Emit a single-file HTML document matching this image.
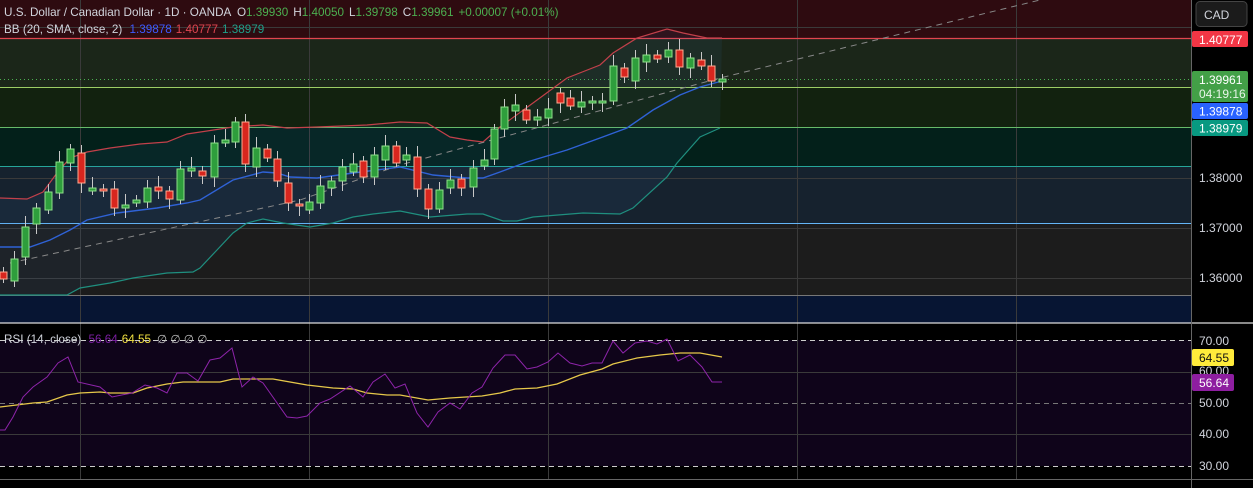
<!DOCTYPE html>
<html><head><meta charset="utf-8"><style>
html,body{margin:0;padding:0;background:#000;width:1253px;height:488px;overflow:hidden;font-family:"Liberation Sans",sans-serif}
svg{position:absolute;left:0;top:0}
</style></head><body>
<svg id="s" width="1253" height="488" xmlns="http://www.w3.org/2000/svg" font-family="Liberation Sans, sans-serif" font-size="12">
<rect x="0" y="0" width="1191" height="38" fill="#2e0b10"/>
<rect x="0" y="38" width="1191" height="49" fill="#1b2619"/>
<rect x="0" y="87" width="1191" height="40" fill="#12220f"/>
<rect x="0" y="127" width="1191" height="39" fill="#03201a"/>
<rect x="0" y="166" width="1191" height="57" fill="#16222e"/>
<rect x="0" y="223" width="1191" height="72" fill="#1c1c1c"/>
<rect x="0" y="295" width="1191" height="28" fill="#071533"/>
<rect x="0" y="340" width="1191" height="126" fill="#0f041a"/>
<g stroke="#3a3a3a" stroke-width="1">
<line x1="80.5" y1="0" x2="80.5" y2="479"/><line x1="309.5" y1="0" x2="309.5" y2="479"/><line x1="548.5" y1="0" x2="548.5" y2="479"/><line x1="797.5" y1="0" x2="797.5" y2="479"/><line x1="1016.5" y1="0" x2="1016.5" y2="479"/>
<line x1="0" y1="27.5" x2="1191" y2="27.5"/><line x1="0" y1="178.5" x2="1191" y2="178.5"/><line x1="0" y1="228.5" x2="1191" y2="228.5"/><line x1="0" y1="278.5" x2="1191" y2="278.5"/>
<line x1="0" y1="372.5" x2="1191" y2="372.5"/><line x1="0" y1="434.5" x2="1191" y2="434.5"/>
</g>
<line x1="0" y1="38.5" x2="1191" y2="38.5" stroke="#e0454f" stroke-width="1.3"/>
<line x1="0" y1="79.5" x2="1191" y2="79.5" stroke="#4caf50" stroke-dasharray="1 3"/>
<line x1="0" y1="87.5" x2="1191" y2="87.5" stroke="#9ccc65"/>
<line x1="0" y1="127.5" x2="1191" y2="127.5" stroke="#66bb6a"/>
<line x1="0" y1="166.5" x2="1191" y2="166.5" stroke="#26a69a"/>
<line x1="0" y1="223.5" x2="1191" y2="223.5" stroke="#64b5f6"/>
<line x1="0" y1="295.5" x2="1191" y2="295.5" stroke="#777"/>
<line x1="0" y1="323" x2="1253" y2="323" stroke="#ddd" stroke-width="1.3"/>
<line x1="0" y1="340.5" x2="1191" y2="340.5" stroke="#ccc" stroke-dasharray="5 4"/>
<line x1="0" y1="403.5" x2="1191" y2="403.5" stroke="#777" stroke-dasharray="5 4"/>
<line x1="0" y1="466.5" x2="1191" y2="466.5" stroke="#ccc" stroke-dasharray="5 4"/>
<line x1="0" y1="479.5" x2="1253" y2="479.5" stroke="#666"/>
<line x1="1191.5" y1="0" x2="1191.5" y2="488" stroke="#666"/>
<polygon id="bbfill" fill="rgba(70,130,200,0.08)"/>
<polyline id="up" fill="none" stroke="#c2404a" stroke-width="1.2"/>
<polyline id="mid" fill="none" stroke="#2f62d6" stroke-width="1.4"/>
<polyline id="lo" fill="none" stroke="#1f8f7f" stroke-width="1.2"/>
<polyline points="10,263 300,200 400,165 720,78 1040,0" fill="none" stroke="#888" stroke-dasharray="6 5"/>
<g id="cd"></g>
<polyline id="rsiY" fill="none" stroke="#e6c84a" stroke-width="1.3"/>
<polyline id="rsiP" fill="none" stroke="#8e24aa" stroke-width="1"/>
<g font-size="11.7">
<text x="4" y="16" fill="#d1d4dc">U.S. Dollar / Canadian Dollar · 1D · OANDA <tspan dx="3">O</tspan><tspan fill="#4caf50">1.39930</tspan><tspan dx="5">H</tspan><tspan fill="#4caf50">1.40050</tspan><tspan dx="5">L</tspan><tspan fill="#4caf50">1.39798</tspan><tspan dx="5">C</tspan><tspan fill="#4caf50">1.39961</tspan><tspan dx="5" fill="#4caf50">+0.00007 (+0.01%)</tspan></text>
<text x="4" y="33" fill="#d1d4dc">BB (20, SMA, close, 2) <tspan dx="4" fill="#3d5afe">1.39878</tspan><tspan dx="4" fill="#e0454f">1.40777</tspan><tspan dx="4" fill="#1f9f8a">1.38979</tspan></text>
<text x="4" y="343" fill="#d1d4dc">RSI (14, close) <tspan dx="4" fill="#7b1fa2">56.64</tspan><tspan dx="4" fill="#f0e040">64.55</tspan><tspan dx="6" fill="#bbb">∅ ∅ ∅ ∅</tspan></text>
</g>
<rect x="1196" y="1.5" width="51" height="25" rx="4" fill="#1b1b1b" stroke="#444"/>
<text x="1204" y="19" fill="#d1d4dc">CAD</text>
<rect x="1192" y="31" width="56" height="16" rx="2" fill="#f23645"/><text x="1199" y="44" fill="#fff">1.40777</text>
<rect x="1192" y="71" width="56" height="31" rx="2" fill="#43a047"/><text x="1199" y="84" fill="#fff">1.39961</text><text x="1199" y="98" fill="#e8f5e9">04:19:16</text>
<rect x="1192" y="103" width="56" height="16" rx="2" fill="#2962ff"/><text x="1199" y="115.5" fill="#fff">1.39878</text>
<rect x="1192" y="120" width="56" height="16" rx="2" fill="#089981"/><text x="1199" y="132.5" fill="#fff">1.38979</text>
<g fill="#d1d4dc"><text x="1199" y="182">1.38000</text><text x="1199" y="232">1.37000</text><text x="1199" y="282">1.36000</text>
<text x="1199" y="345">70.00</text><text x="1199" y="375">60.00</text><text x="1199" y="407">50.00</text><text x="1199" y="438">40.00</text><text x="1199" y="470">30.00</text></g>
<rect x="1192" y="349" width="42" height="17" rx="2" fill="#ffeb3b"/><text x="1199" y="362" fill="#111">64.55</text>
<rect x="1192" y="374" width="42" height="17" rx="2" fill="#8e1ea0"/><text x="1199" y="387" fill="#fff">56.64</text>
</svg>
<script>
var up=[[0,198],[27,199],[43,192],[57,173],[70,158],[87,152],[110,148],[140,144],[167,142],[187,134],[207,131],[233,127],[263,125],[287,128],[317,127],[367,125],[400,122],[427,123],[450,137],[467,140],[483,142],[500,127],[533,103],[567,78],[600,65],[613,53],[637,38],[667,29],[683,33],[707,38],[722,38]];
var mid=[[0,247],[30,247],[50,240],[70,230],[87,220],[117,213],[157,208],[187,203],[200,200],[233,180],[263,172],[277,173],[290,177],[317,178],[353,173],[400,167],[433,175],[467,178],[483,178],[500,172],[527,162],[567,150],[600,138],[627,128],[653,110],[680,95],[700,87],[722,81]];
var lo=[[0,295],[67,295],[80,288],[110,283],[133,278],[167,273],[193,272],[200,268],[217,250],[233,233],[247,223],[263,219],[283,223],[310,227],[333,223],[353,217],[373,214],[400,211],[430,217],[467,214],[483,214],[503,221],[517,221],[533,217],[583,213],[620,214],[633,208],[667,177],[677,163],[700,137],[720,128]];
function p(a){return a.map(function(q){return q.join(',')}).join(' ')}
document.getElementById('up').setAttribute('points',p(up));
document.getElementById('mid').setAttribute('points',p(mid));
document.getElementById('lo').setAttribute('points',p(lo));
document.getElementById('bbfill').setAttribute('points',p(up)+' '+p(lo.slice().reverse()));
var rp=[[0,430],[5,430],[13,417],[23,397],[33,387],[47,377],[58,363],[68,357],[78,382],[100,387],[112,397],[132,393],[145,385],[157,388],[167,393],[177,373],[187,373],[198,381],[210,360],[220,358],[232,348],[242,387],[253,377],[263,383],[287,417],[297,418],[307,416],[320,403],[330,399],[350,386],[363,397],[373,382],[385,374],[395,388],[405,384],[417,413],[428,427],[438,412],[450,403],[460,409],[472,393],[482,387],[493,368],[505,355],[515,355],[527,369],[537,367],[548,362],[558,353],[570,363],[582,366],[592,363],[602,363],[613,341],[623,353],[635,343],[647,341],[657,344],[667,339],[678,361],[690,355],[702,367],[712,382],[722,382]];
var ry=[[0,407],[33,403],[47,402],[67,395],[80,393],[100,392],[110,393],[133,393],[147,388],[167,384],[183,382],[220,382],[233,379],[273,379],[307,385],[333,388],[353,389],[367,393],[387,395],[400,395],[428,400],[450,398],[482,396],[500,393],[515,389],[537,388],[557,384],[580,375],[602,369],[613,364],[637,358],[660,355],[680,353],[700,353],[722,357]];
document.getElementById('rsiP').setAttribute('points',p(rp));
document.getElementById('rsiY').setAttribute('points',p(ry));
var c=[[3,272,279,0],[14,259,281,1],[25,227,257,1],[36,208,224,1],[48,192,210,1],[59,162,193,1],[70,149,163,1],[81,153,183,0],[92,188,191,1],[103,189,191,0],[114,189,208,0],[125,205,208,1],[136,200,203,1],[147,188,202,1],[158,187,191,0],[169,191,199,0],[180,169,200,1],[191,168,171,1],[202,171,176,0],[214,143,177,1],[225,140,143,1],[235,122,142,1],[245,122,164,0],[256,148,167,1],[267,149,158,0],[277,159,181,0],[288,183,203,0],[299,204,206,0],[309,202,210,1],[320,186,203,1],[331,181,188,1],[342,167,181,1],[353,164,172,1],[363,161,177,0],[374,155,177,1],[385,146,160,1],[396,146,163,0],[406,155,160,1],[417,157,189,0],[428,189,209,0],[439,190,209,1],[450,180,188,1],[461,179,188,0],[473,168,187,1],[484,160,166,1],[494,129,159,1],[504,107,129,1],[515,105,111,1],[526,110,120,0],[537,117,120,1],[548,109,118,1],[560,93,103,0],[570,98,106,0],[581,102,107,1],[592,101,102,1],[602,101,102,1],[613,66,101,1],[624,68,77,0],[635,58,81,1],[646,55,62,1],[657,55,59,0],[668,50,57,1],[679,50,67,0],[690,58,68,1],[701,60,66,0],[711,66,81,0],[722,79,82,1]];
var h='';
c.forEach(function(k,i){var x=k[0],t=k[1],b=k[2],g=k[3];var wt=t-5-(i%3)*3,wb=b+4+(i%4)*2;
h+='<line x1="'+(x+.5)+'" y1="'+wt+'" x2="'+(x+.5)+'" y2="'+wb+'" stroke="#c8c8c8" stroke-width="1"/>';
var hh=Math.max(b-t,2);
h+='<rect x="'+(x-3)+'" y="'+t+'" width="7" height="'+hh+'" fill="'+(g?'#2e9e3c':'#d8261e')+'" stroke="'+(g?'#8ee08a':'#ffab91')+'" stroke-width="1"/>';});
document.getElementById('cd').innerHTML=h;
</script>
</body></html>
